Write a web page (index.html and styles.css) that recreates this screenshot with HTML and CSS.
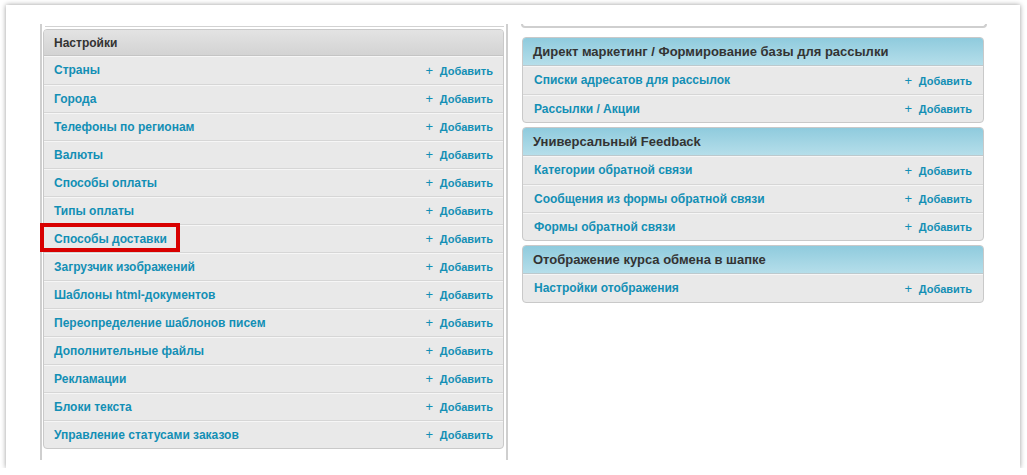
FILE: index.html
```html
<!DOCTYPE html>
<html lang="ru">
<head>
  <meta charset="UTF-8" />
  <meta name="viewport" content="width=device-width, initial-scale=1.0"/>
  <title>Настройки</title>
  <link rel="stylesheet" href="styles.css">
</head>
<body>
  <div class="card">
    <div class="col col-left">
      <div class="stub"></div>
      <div class="module">
        <div class="module-head">Настройки</div>
        <div class="row"><a href="#">Страны</a><span class="add">+ <b>Добавить</b></span></div>
        <div class="row"><a href="#">Города</a><span class="add">+ <b>Добавить</b></span></div>
        <div class="row"><a href="#">Телефоны по регионам</a><span class="add">+ <b>Добавить</b></span></div>
        <div class="row"><a href="#">Валюты</a><span class="add">+ <b>Добавить</b></span></div>
        <div class="row"><a href="#">Способы оплаты</a><span class="add">+ <b>Добавить</b></span></div>
        <div class="row"><a href="#">Типы оплаты</a><span class="add">+ <b>Добавить</b></span></div>
        <div class="row"><a href="#">Способы доставки</a><span class="add">+ <b>Добавить</b></span></div>
        <div class="row"><a href="#">Загрузчик изображений</a><span class="add">+ <b>Добавить</b></span></div>
        <div class="row"><a href="#">Шаблоны html-документов</a><span class="add">+ <b>Добавить</b></span></div>
        <div class="row"><a href="#">Переопределение шаблонов писем</a><span class="add">+ <b>Добавить</b></span></div>
        <div class="row"><a href="#">Дополнительные файлы</a><span class="add">+ <b>Добавить</b></span></div>
        <div class="row"><a href="#">Рекламации</a><span class="add">+ <b>Добавить</b></span></div>
        <div class="row"><a href="#">Блоки текста</a><span class="add">+ <b>Добавить</b></span></div>
        <div class="row"><a href="#">Управление статусами заказов</a><span class="add">+ <b>Добавить</b></span></div>
      </div>
    </div>

    <div class="col col-right">
      <div class="stub stub-round"></div>
      <div class="module">
        <div class="module-head blue">Директ маркетинг / Формирование базы для рассылки</div>
        <div class="row"><a href="#">Списки адресатов для рассылок</a><span class="add">+ <b>Добавить</b></span></div>
        <div class="row"><a href="#">Рассылки / Акции</a><span class="add">+ <b>Добавить</b></span></div>
      </div>
      <div class="module">
        <div class="module-head blue">Универсальный Feedback</div>
        <div class="row"><a href="#">Категории обратной связи</a><span class="add">+ <b>Добавить</b></span></div>
        <div class="row"><a href="#">Сообщения из формы обратной связи</a><span class="add">+ <b>Добавить</b></span></div>
        <div class="row"><a href="#">Формы обратной связи</a><span class="add">+ <b>Добавить</b></span></div>
      </div>
      <div class="module">
        <div class="module-head blue">Отображение курса обмена в шапке</div>
        <div class="row"><a href="#">Настройки отображения</a><span class="add">+ <b>Добавить</b></span></div>
      </div>
    </div>

    <div class="highlight"></div>
  </div>
</body>
</html>
```

FILE: styles.css
```css
body {
  margin: 0;
  background: #fff;
  font-family: "Liberation Sans", Arial, sans-serif;
}
.card {
  position: relative;
  box-sizing: border-box;
  margin: 5px 7px 0 6px;
  height: 463px;
  padding: 19px 0 0 34px;
  background: #fff;
  box-shadow: 0 0 5px rgba(0, 0, 0, 0.4);
  display: flex;
  gap: 13px;
}
.col {
  box-sizing: border-box;
}
.col-left {
  width: 468px;
  height: 436px;
  padding: 0 2px 0 1px;
  border-left: 2px solid #cfcfcf;
  border-right: 2px solid #cfcfcf;
}
.col-right {
  width: 466px;
  padding: 0 3px 0 1px;
}
.stub {
  height: 2px;
  margin: 0 0 2px 2px;
  border-bottom: 1px solid #d2d2d2;
}
.stub-round {
  height: 2px;
  margin: 0 -3px 9px -1px;
  border: 2px solid #cfcfcf;
  border-top: none;
  border-radius: 0 0 5px 5px;
}
.module {
  border: 1px solid #c9c9c9;
  border-radius: 4px;
  background: #e9e9e9;
  overflow: hidden;
  margin-bottom: 4px;
}
.module-head {
  height: 25px;
  line-height: 26px;
  padding: 0 10px;
  font-size: 12px;
  font-weight: bold;
  color: #333;
  background: linear-gradient(#e3e3e3, #d3d3d3);
  border-bottom: 1px solid #c4c4c4;
}
.module-head.blue {
  height: 27px;
  line-height: 27px;
  font-size: 13px;
  background: linear-gradient(#8fcbdd, #b5deea);
  border-bottom-color: #bcc9cd;
}
.row {
  height: 27px;
  display: flex;
  align-items: center;
  justify-content: space-between;
  padding: 0 10px;
  border-top: 1px solid #d6d6d6;
  box-shadow: inset 0 1px 0 #f6f6f6;
}
.module-head + .row {
  border-top: none;
  height: 28px;
}
.row a {
  font-size: 12px;
  font-weight: bold;
  color: #138fb5;
  text-decoration: none;
}
.add {
  font-size: 13px;
  color: #138fb5;
}
.add b {
  font-size: 11px;
  margin-left: 3px;
}
.col-right .row {
  padding: 0 11px;
}
.highlight {
  position: absolute;
  left: 34px;
  top: 218px;
  width: 132px;
  height: 21px;
  border: 4px solid #d80000;
}
```
